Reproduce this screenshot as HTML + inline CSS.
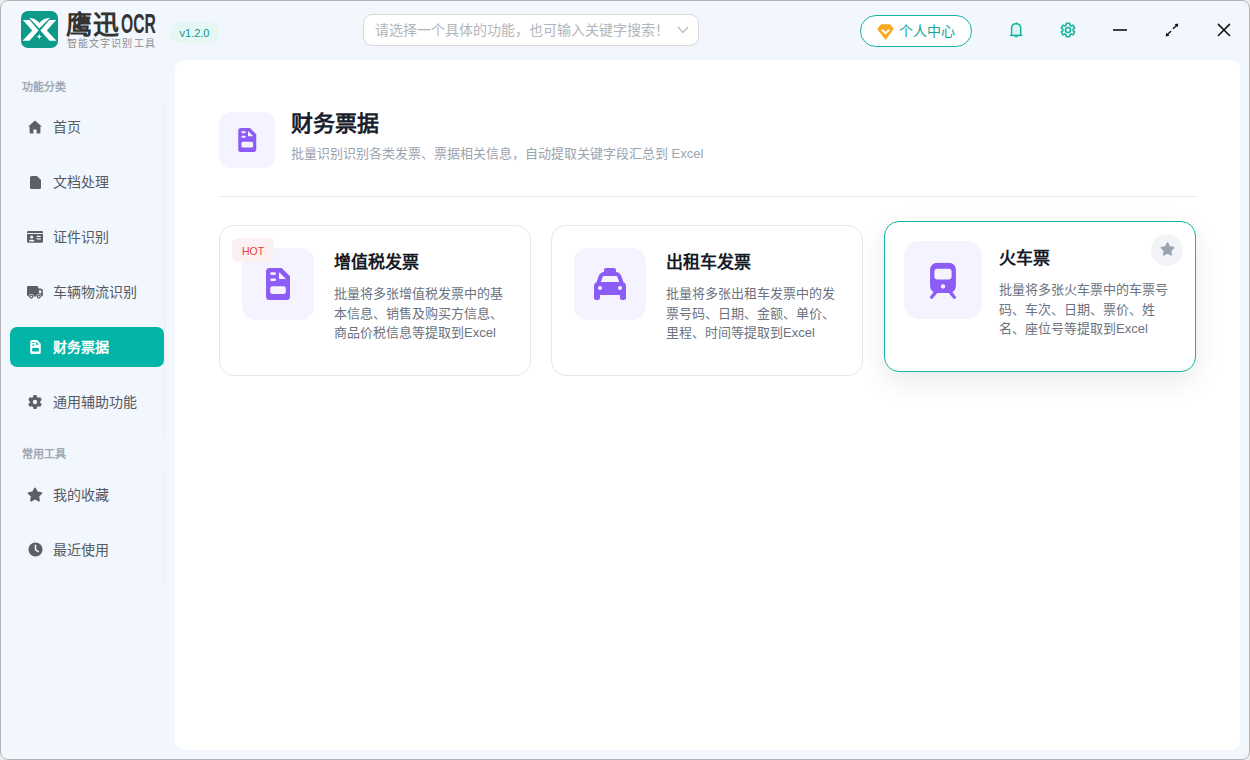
<!DOCTYPE html>
<html lang="zh-CN"><head><meta charset="utf-8">
<style>
*{box-sizing:border-box;margin:0;padding:0}
html,body{width:1250px;height:760px;overflow:hidden;background:#ececec;font-family:"Liberation Sans",sans-serif}
.win{position:absolute;left:0;top:0;width:1250px;height:760px;border-radius:8px;background:#f2f6fd;overflow:hidden}
.frame{position:absolute;left:0;top:0;width:1250px;height:760px;border:1px solid #b4b4b4;border-radius:8px;pointer-events:none}
.abs{position:absolute}
.logo{left:21px;top:11px;width:37px;height:37px;border-radius:7px;background:#0e9a89}
.brand{left:65px;top:8px;height:30px;font-size:25px;font-weight:bold;color:#333;white-space:nowrap;line-height:30px}
.brand-sub{left:67px;top:38px;font-size:10px;letter-spacing:1.1px;color:#8a8c90;line-height:12px;white-space:nowrap}
.ver{left:170px;top:22px;width:49px;height:21px;border-radius:11px;background:#e5f7f2;color:#0f9688;font-size:11px;line-height:23px;text-align:center}
.search{left:363px;top:14px;width:336px;height:32px;border:1px solid #d6d6d6;border-radius:9px;background:#fff}
.search span{position:absolute;left:11px;top:0;line-height:30px;font-size:14px;color:#b3b5ba;white-space:nowrap}
.user{left:860px;top:15px;width:112px;height:32px;border:1.8px solid #18b4a7;border-radius:16px;background:#fff}
.user span{position:absolute;left:37.5px;top:1px;line-height:28.4px;font-size:14px;color:#12a59a;white-space:nowrap}
.side-h{font-size:11px;font-weight:bold;color:#a0a7b3;line-height:14px;left:22px;white-space:nowrap}
.item{left:10px;width:154px;height:40px;border-radius:7px}
.item span{position:absolute;left:43px;top:0;line-height:40px;font-size:14px;color:#555a63;white-space:nowrap}
.item svg{position:absolute}
.item.active{background:#02b5a8}
.item.active span{color:#fff;font-weight:bold}
.vline{left:164px;width:1px;background:#eaecf1}
.panel{left:175px;top:60px;width:1065px;height:690px;border-radius:9px;background:#fff}
.hicon{left:219px;top:112px;width:56px;height:56px;border-radius:12px;background:#f5f3ff}
.htitle{left:291px;top:109.5px;font-size:22px;font-weight:bold;color:#1a1f2e;line-height:28px;white-space:nowrap}
.hsub{left:291px;top:145px;font-size:13px;color:#9ba3af;line-height:18px;white-space:nowrap}
.hr{left:219px;top:196px;width:977px;height:1px;background:#e8eaef}
.card{width:312px;height:151px;border:1px solid #e4e7ee;border-radius:15px;background:#fff}
.card .ib{position:absolute;left:22px;top:22px;width:72px;height:72px;border-radius:14px;background:#f5f3ff}
.card .t{position:absolute;left:114px;top:25px;font-size:17px;font-weight:bold;color:#151a26;line-height:24px;white-space:nowrap}
.card .d{position:absolute;left:114px;top:58px;width:180px;font-size:13px;color:#6b7280;line-height:19.5px}
.card.hov{border-color:#12b5a6;box-shadow:0 9px 28px rgba(0,0,0,0.09)}
.hot{left:12px;top:12px;width:42px;height:24px;border-radius:6px;background:#fdf0f0;color:#ee3b3b;font-size:10.5px;line-height:26px;text-align:center}
.star{left:266px;top:12px;width:32px;height:32px;border-radius:16px;background:#f3f4f7}
</style></head><body>
<svg width="0" height="0" style="position:absolute"><defs><path id="docp" fill-rule="evenodd" d="M3.5,0 H15.7 L24,8.3 V28.5 Q24,32 20.5,32 H3.5 Q0,32 0,28.5 V3.5 Q0,0 3.5,0 Z M13,4 V11 H20 Z M5.5,4.3 H8.7 Q10,4.3 10,5.6 Q10,6.9 8.7,6.9 H5.5 Q4.2,6.9 4.2,5.6 Q4.2,4.3 5.5,4.3 Z M5.5,10.4 H8.7 Q10,10.4 10,11.7 Q10,13 8.7,13 H5.5 Q4.2,13 4.2,11.7 Q4.2,10.4 5.5,10.4 Z M6.2,18.2 H17.8 Q19.8,18.2 19.8,20.2 V24 Q19.8,26 17.8,26 H6.2 Q4.2,26 4.2,24 V20.2 Q4.2,18.2 6.2,18.2 Z"/></defs></svg>
<div class="win">
  <!-- header -->
  <div class="abs logo">
    <svg width="37" height="37" viewBox="0 0 37 37">
      <g fill="#fff">
        <polygon points="1.8,9 8.6,9 17.6,19.4 8.4,29.8 1.5,29.8 11.2,19.4"/>
        <polygon points="35.2,9 28.4,9 19.4,19.4 28.6,29.8 35.5,29.8 25.8,19.4"/>
        <path d="M8.1,6.8 Q14,7 18.3,11.8 Q22.6,7 29.1,6.8 L18.3,17.4 Z"/>
        <path d="M18.3,22.8 L19.1,25 L21.2,25.6 L19.1,26.2 L18.3,28.6 L17.5,26.2 L15.4,25.6 L17.5,25 Z"/>
      </g>
    </svg>
  </div>
  <div class="abs brand" style="left:66px;top:10px;font-size:26px;line-height:30px;font-weight:900;letter-spacing:0.5px">鹰迅</div><div class="abs" style="left:120.5px;top:9px;font-size:28px;line-height:30px;color:#333;white-space:nowrap;transform:scaleX(0.56);transform-origin:left top;font-weight:bold">OCR</div>
  <div class="abs brand-sub">智能文字识别工具</div>
  <div class="abs ver">v1.2.0</div>
  <div class="abs search"><span>请选择一个具体的功能，也可输入关键字搜索！</span>
    <svg class="abs" style="left:313px;top:11px" width="12" height="8" viewBox="0 0 12 8"><polyline points="1,1 6,6.5 11,1" fill="none" stroke="#b9bcc3" stroke-width="1.2"/></svg>
  </div>
  <div class="abs user">
    <svg class="abs" style="left:15.5px;top:7.5px" width="17" height="16" viewBox="0 0 17 16"><path d="M4,0.8 H13 L16.3,5 L8.5,15.3 L0.7,5 Z" fill="#f9a91e" stroke="#f9a91e" stroke-width="1" stroke-linejoin="round"/><polyline points="4.8,5.8 8.5,9.3 12.2,5.8" fill="none" stroke="#fff" stroke-width="1.9"/></svg>
    <span>个人中心</span>
  </div>
  <svg class="abs" style="left:1004px;top:18px" width="24" height="24" viewBox="0 0 24 24"><path d="M7.6,17.4 V10.2 C7.6,7.2 9.6,5.7 12.2,5.7 C14.8,5.7 16.7,7.2 16.7,10.2 V17.4 Z" fill="#dff6f0" stroke="#1ab3a4" stroke-width="1.5" stroke-linejoin="round"/><line x1="6.2" y1="17.4" x2="18" y2="17.4" stroke="#1ab3a4" stroke-width="1.4" stroke-linecap="round"/><path d="M10.2,18 Q12.2,20.8 14.2,18 Z" fill="#1ab3a4"/><path d="M11.2,5.2 L12.2,3.8 L13.2,5.2 Z" fill="#1ab3a4"/></svg>
  <svg class="abs" style="left:1056px;top:18px" width="24" height="24" viewBox="0 0 24 24"><path d="M10.14,7.15 L10.31,5.21 L13.69,5.21 L13.86,7.15 L15.27,7.96 L17.04,7.14 L18.73,10.07 L17.14,11.19 L17.14,12.81 L18.73,13.93 L17.04,16.86 L15.27,16.04 L13.86,16.85 L13.69,18.79 L10.31,18.79 L10.14,16.85 L8.73,16.04 L6.96,16.86 L5.27,13.93 L6.86,12.81 L6.86,11.19 L5.27,10.07 L6.96,7.14 L8.73,7.96 Z" fill="#e0f6f1" stroke="#1ab3a4" stroke-width="1.6" stroke-linejoin="round"/><circle cx="12" cy="12" r="2.5" fill="#f2f6fd" stroke="#1ab3a4" stroke-width="1.6"/></svg>
  <div class="abs" style="left:1113px;top:29px;width:14px;height:2px;background:#3d4046"></div>
  <svg class="abs" style="left:1160px;top:18px" width="24" height="24" viewBox="0 0 24 24"><g stroke="#111" stroke-width="1.5" stroke-linecap="round"><line x1="13.4" y1="10.5" x2="16.2" y2="7.7"/><line x1="10.6" y1="13.5" x2="7.8" y2="16.3"/></g><path d="M18.3,5.6 L14.6,6.2 L17.7,9.3 Z" fill="#111"/><path d="M5.7,18.4 L6.3,14.7 L9.4,17.8 Z" fill="#111"/></svg>
  <svg class="abs" style="left:1212px;top:18px" width="24" height="24" viewBox="0 0 24 24"><g stroke="#111" stroke-width="1.55" stroke-linecap="round"><line x1="6.4" y1="6.4" x2="17.5" y2="17.5"/><line x1="17.5" y1="6.4" x2="6.4" y2="17.5"/></g></svg>

  <!-- sidebar -->
  <div class="abs side-h" style="top:80px">功能分类</div>
  <div class="abs vline" style="top:103px;height:333px"></div>
  <div class="abs vline" style="top:471px;height:113px"></div>
  <div class="abs item" style="top:107px"><svg style="left:18px;top:13px" width="14" height="14" viewBox="0 0 14 14"><path d="M7,0.5 L13.8,6.6 L12.4,6.6 L12.4,12.5 Q12.4,13.6 11.3,13.6 L2.7,13.6 Q1.6,13.6 1.6,12.5 L1.6,6.6 L0.2,6.6 Z M5.4,9.5 V13.6 H8.6 V9.5 Z" fill="#5b6068" fill-rule="evenodd"/></svg><span>首页</span></div>
  <div class="abs item" style="top:162px"><svg style="left:20px;top:14px" width="11" height="13" viewBox="0 0 11 13"><path d="M1.5,0 H7 L11,4 V11.5 Q11,13 9.5,13 H1.5 Q0,13 0,11.5 V1.5 Q0,0 1.5,0 Z" fill="#5b6068"/></svg><span>文档处理</span></div>
  <div class="abs item" style="top:217px"><svg style="left:17px;top:14px" width="16" height="12" viewBox="0 0 16 12"><path d="M1.2,0 H14.8 Q16,0 16,1.2 V1.9 H0 V1.2 Q0,0 1.2,0 Z" fill="#5b6068"/><path d="M0,3.1 H16 V10.5 Q16,11.8 14.5,11.8 H1.5 Q0,11.8 0,10.5 Z" fill="#5b6068"/><circle cx="4.7" cy="6" r="1.55" fill="#f2f6fd"/><rect x="2.2" y="8.8" width="5" height="1.8" rx="0.9" fill="#f2f6fd"/><rect x="9.6" y="4.7" width="4.2" height="1.3" rx="0.6" fill="#f2f6fd"/><rect x="9.6" y="7.2" width="4.2" height="1.4" rx="0.3" fill="#f2f6fd"/></svg><span>证件识别</span></div>
  <div class="abs item" style="top:272px"><svg style="left:17px;top:14px" width="16" height="13" viewBox="0 0 16 13"><path d="M1.3,0 H10 Q11.2,0 11.2,1.2 V2.4 H13.3 Q15.9,2.4 15.9,5 V9.2 Q15.9,10.4 14.7,10.4 H1.3 Q0,10.4 0,9.1 V1.3 Q0,0 1.3,0 Z M12,4.2 H13.2 Q14.3,4.2 14.3,5.4 V7.2 H12 Z" fill="#5b6068" fill-rule="evenodd"/><circle cx="4.3" cy="10.6" r="2.5" fill="#f2f6fd"/><circle cx="11.8" cy="10.6" r="2.5" fill="#f2f6fd"/><circle cx="4.3" cy="10.6" r="1.45" fill="#f2f6fd" stroke="#5b6068" stroke-width="1.3"/><circle cx="11.8" cy="10.6" r="1.45" fill="#f2f6fd" stroke="#5b6068" stroke-width="1.3"/></svg><span>车辆物流识别</span></div>
  <div class="abs item active" style="top:327px"><svg style="left:19.5px;top:13px" width="11" height="14" viewBox="0 0 24 32"><use href="#docp" fill="#fff"/></svg><span>财务票据</span></div>
  <div class="abs item" style="top:382px"><svg style="left:18px;top:13px" width="14" height="14" viewBox="0 0 512 512"><path d="M495.9 166.6c3.2 8.7 .5 18.4-6.4 24.6l-43.3 39.4c1.1 8.3 1.7 16.8 1.7 25.4s-.6 17.1-1.7 25.4l43.3 39.4c6.9 6.2 9.6 15.9 6.4 24.6c-4.4 11.9-9.7 23.3-15.8 34.3l-4.7 8.1c-6.6 11-14 21.4-22.1 31.2c-5.9 7.2-15.7 9.6-24.5 6.8l-55.7-17.7c-13.4 10.3-28.2 18.9-44 25.4l-12.5 57.1c-2 9.1-9 16.3-18.2 17.8c-13.8 2.3-28 3.5-42.5 3.5s-28.7-1.2-42.5-3.5c-9.2-1.5-16.2-8.7-18.2-17.8l-12.5-57.1c-15.8-6.5-30.6-15.1-44-25.4L83.1 425.9c-8.8 2.8-18.6 .3-24.5-6.8c-8.1-9.8-15.5-20.2-22.1-31.2l-4.7-8.1c-6.1-11-11.4-22.4-15.8-34.3c-3.2-8.7-.5-18.4 6.4-24.6l43.3-39.4C64.6 273.1 64 264.6 64 256s.6-17.1 1.7-25.4L22.4 191.2c-6.9-6.2-9.6-15.9-6.4-24.6c4.4-11.9 9.7-23.3 15.8-34.3l4.7-8.1c6.6-11 14-21.4 22.1-31.2c5.9-7.2 15.7-9.6 24.5-6.8l55.7 17.7c13.4-10.3 28.2-18.9 44-25.4l12.5-57.1c2-9.1 9-16.3 18.2-17.8C227.3 1.2 241.5 0 256 0s28.7 1.2 42.5 3.5c9.2 1.5 16.2 8.7 18.2 17.8l12.5 57.1c15.8 6.5 30.6 15.1 44 25.4l55.7-17.7c8.8-2.8 18.6-.3 24.5 6.8c8.1 9.8 15.5 20.2 22.1 31.2l4.7 8.1c6.1 11 11.4 22.4 15.8 34.3zM256 336a80 80 0 1 0 0-160 80 80 0 1 0 0 160z" fill="#5b6068"/></svg><span>通用辅助功能</span></div>
  <div class="abs side-h" style="top:447px">常用工具</div>
  <div class="abs item" style="top:475px"><svg style="left:17px;top:12px" width="16" height="15" viewBox="0 0 576 512"><path d="M316.9 18C311.6 7 300.4 0 288.1 0s-23.4 7-28.8 18L195 150.3 51.4 171.5c-12 1.8-22 10.2-25.7 21.7s-.7 24.2 7.9 32.7L137.8 329 113.2 474.7c-2 12 3 24.2 12.9 31.3s23 8 33.8 2.3l128.3-68.5 128.3 68.5c10.8 5.7 23.9 4.9 33.8-2.3s14.9-19.3 12.9-31.3L438.5 329 542.7 225.9c8.6-8.5 11.7-21.2 7.9-32.7s-13.7-19.9-25.7-21.7L381.2 150.3 316.9 18z" fill="#5b6068"/></svg><span>我的收藏</span></div>
  <div class="abs item" style="top:530px"><svg style="left:18px;top:12px" width="15" height="15" viewBox="0 0 16 16"><circle cx="8" cy="8" r="7.5" fill="#5b6068"/><path d="M8,3.5 V8.3 L11,10.2" fill="none" stroke="#f2f6fd" stroke-width="1.6" stroke-linecap="round"/></svg><span>最近使用</span></div>

  <!-- panel -->
  <div class="abs panel"></div>
  <div class="abs hicon"><svg class="abs" style="left:19px;top:16px" width="18.5" height="24" viewBox="0 0 24 32"><use href="#docp" fill="#8b5cf6"/></svg></div>
  <div class="abs htitle">财务票据</div>
  <div class="abs hsub">批量识别识别各类发票、票据相关信息，自动提取关键字段汇总到 Excel</div>
  <div class="abs hr"></div>

  <div class="abs card" style="left:219px;top:225px">
    <div class="ib"><svg class="abs" style="left:24px;top:20px" width="24" height="32" viewBox="0 0 24 32"><use href="#docp" fill="#8b5cf6"/></svg></div>
    <div class="abs hot">HOT</div>
    <div class="t">增值税发票</div>
    <div class="d">批量将多张增值税发票中的基本信息、销售及购买方信息、商品价税信息等提取到Excel</div>
  </div>
  <div class="abs card" style="left:551px;top:225px">
    <div class="ib"><svg class="abs" style="left:20px;top:20px" width="32" height="32" viewBox="0 0 512 512"><path d="M192 0c-17.7 0-32 14.3-32 32V64c0 .1 0 .1 0 .2c-38.6 2.2-72.3 27.3-85.2 64.1L39.6 228.8C16.4 238.4 0 261.3 0 288V432v48c0 17.7 14.3 32 32 32H64c17.7 0 32-14.3 32-32V432H416v48c0 17.7 14.3 32 32 32h32c17.7 0 32-14.3 32-32V432 288c0-26.7-16.4-49.6-39.6-59.2L437.2 128.3C424.3 91.5 390.6 66.4 352 64.2c0-.1 0-.1 0-.2V32c0-17.7-14.3-32-32-32H192zM165.4 128H346.6c13.6 0 25.7 8.6 30.2 21.4L402.9 224H109.1l26.1-74.6c4.5-12.8 16.6-21.4 30.2-21.4zM96 288a32 32 0 1 1 0 64 32 32 0 1 1 0-64zm288 32a32 32 0 1 1 64 0 32 32 0 1 1 -64 0z" fill="#8b5cf6"/></svg></div>
    <div class="t">出租车发票</div>
    <div class="d">批量将多张出租车发票中的发票号码、日期、金额、单价、里程、时间等提取到Excel</div>
  </div>
  <div class="abs card hov" style="left:884px;top:221px">
    <div class="ib" style="transform:scale(1.08)"><svg class="abs" style="left:24px;top:20px" width="24" height="34" viewBox="0 0 24 34"><rect x="0" y="0" width="24" height="28" rx="6.5" fill="#8b5cf6"/><rect x="4" y="5.5" width="16" height="10" rx="3" fill="#f5f3ff"/><circle cx="12" cy="22" r="2" fill="#f5f3ff"/><g stroke="#8b5cf6" stroke-width="3" stroke-linecap="round"><line x1="5.5" y1="27" x2="1.5" y2="32"/><line x1="18.5" y1="27" x2="22.5" y2="32"/></g></svg></div>
    <div class="t">火车票</div>
    <div class="d">批量将多张火车票中的车票号码、车次、日期、票价、姓名、座位号等提取到Excel</div>
    <div class="abs star"><svg class="abs" style="left:8.5px;top:8px" width="15" height="14" viewBox="0 0 576 512"><path d="M316.9 18C311.6 7 300.4 0 288.1 0s-23.4 7-28.8 18L195 150.3 51.4 171.5c-12 1.8-22 10.2-25.7 21.7s-.7 24.2 7.9 32.7L137.8 329 113.2 474.7c-2 12 3 24.2 12.9 31.3s23 8 33.8 2.3l128.3-68.5 128.3 68.5c10.8 5.7 23.9 4.9 33.8-2.3s14.9-19.3 12.9-31.3L438.5 329 542.7 225.9c8.6-8.5 11.7-21.2 7.9-32.7s-13.7-19.9-25.7-21.7L381.2 150.3 316.9 18z" fill="#9aa3b2"/></svg></div>
  </div>
</div>
<div class="frame"></div>
</body></html>
